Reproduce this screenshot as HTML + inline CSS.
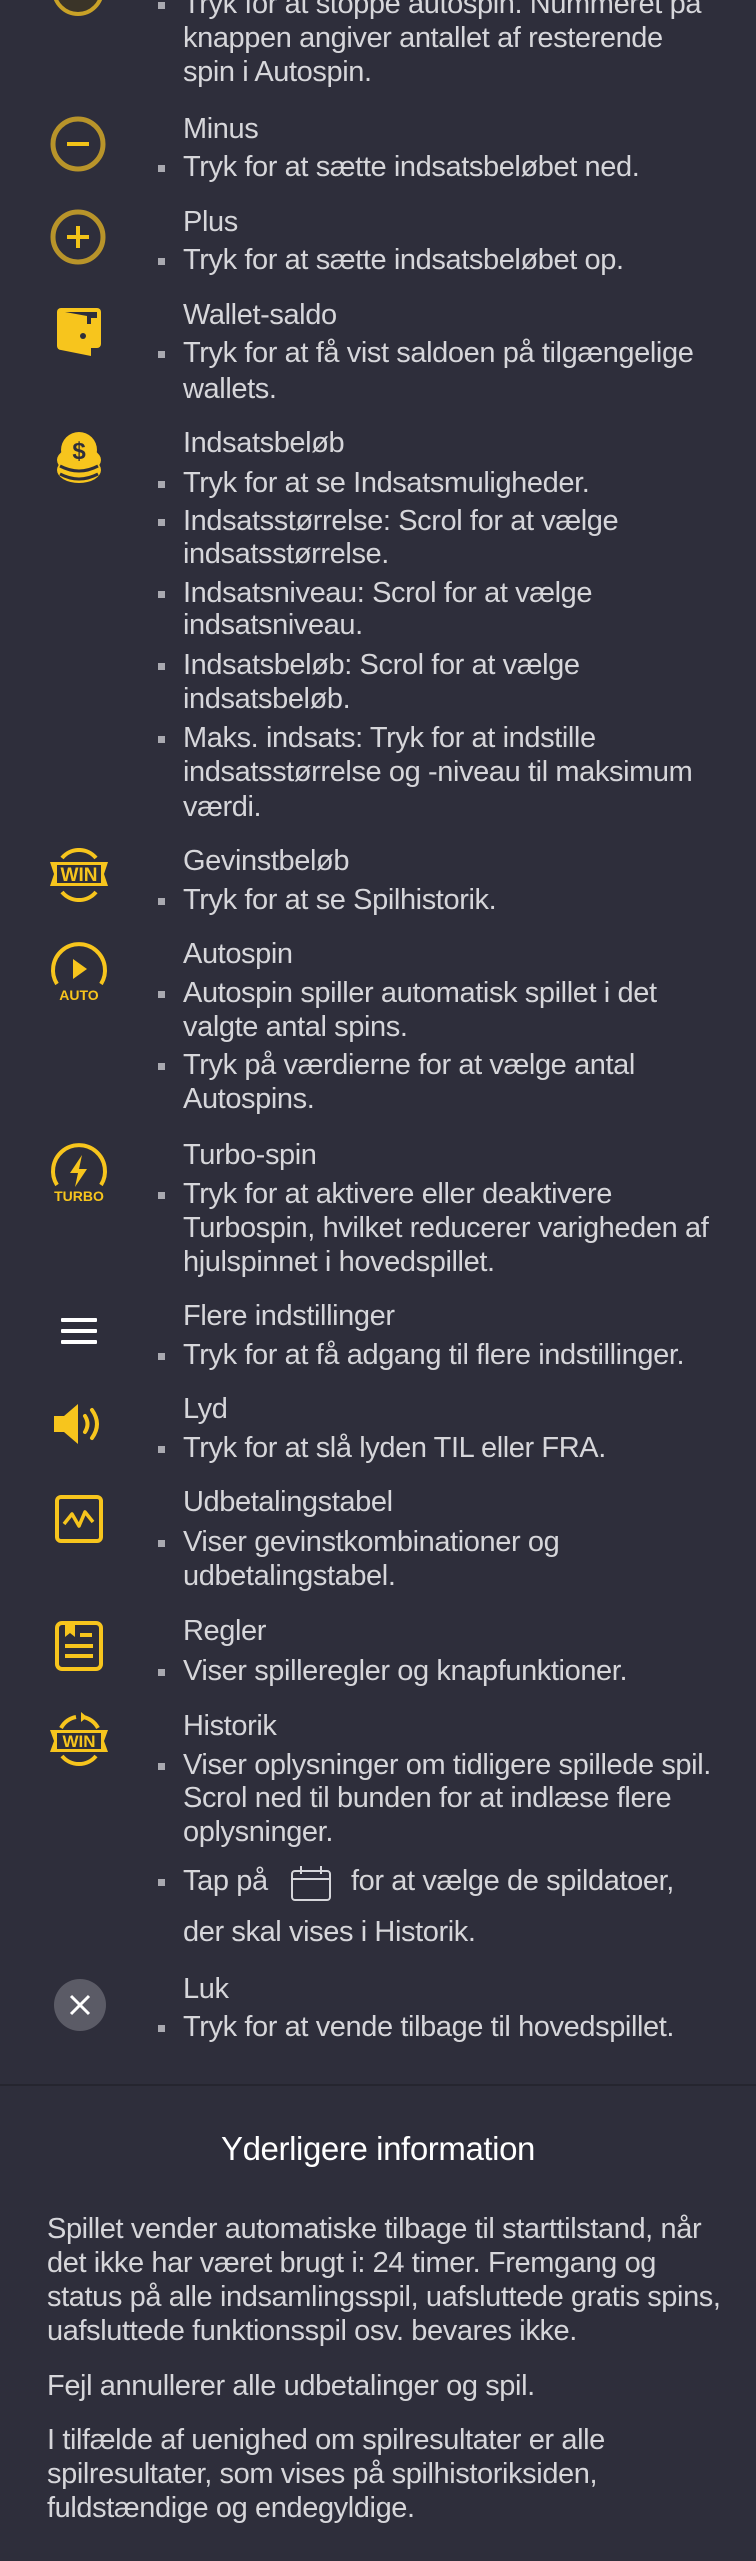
<!DOCTYPE html>
<html><head><meta charset="utf-8"><style>
*{margin:0;padding:0;box-sizing:border-box}
body{width:756px;height:2561px;background:#2e2e3b;position:relative;overflow:hidden;font-family:"Liberation Sans",sans-serif;color:#d6d6da}
.l{position:absolute;left:183px;height:34px;line-height:34px;font-size:29px;white-space:nowrap;letter-spacing:-0.4px}
.b::before{content:"";position:absolute;left:-25px;top:15px;width:7px;height:7px;background:#a9a9b0}
.p{position:absolute;left:47px;height:34px;line-height:34px;font-size:29px;white-space:nowrap;letter-spacing:-0.4px}
svg{position:absolute}
.sep{position:absolute;left:0;top:2084px;width:756px;height:2px;background:#25252f}
h2{position:absolute;top:2129px;left:0;width:756px;text-align:center;font-size:33px;font-weight:normal;color:#fff;line-height:40px;letter-spacing:-0.4px}
</style></head><body>

<svg style="left:50px;top:-24px" width="56" height="40" viewBox="0 0 56 40"><circle cx="28" cy="14" r="24" fill="#3a3428" stroke="#c9a227" stroke-width="4"/><rect x="14" y="10" width="28" height="6" fill="#d8a91e"/></svg>
<div class="l b" style="top:-13px">Tryk for at stoppe autospin. Nummeret på</div>
<div class="l" style="top:21px">knappen angiver antallet af resterende</div>
<div class="l" style="top:55px">spin i Autospin.</div>

<svg style="left:50px;top:116px" width="56" height="56"><circle cx="28" cy="28" r="25" fill="none" stroke="#b8942a" stroke-width="5"/><rect x="17" y="26" width="22" height="4" fill="#f2c318"/></svg>
<div class="l" style="top:112px">Minus</div>
<div class="l b" style="top:150px">Tryk for at sætte indsatsbeløbet ned.</div>

<svg style="left:50px;top:209px" width="56" height="56"><circle cx="28" cy="28" r="25" fill="none" stroke="#b8942a" stroke-width="5"/><rect x="17" y="26" width="22" height="4" fill="#f2c318"/><rect x="26" y="17" width="4" height="22" fill="#f2c318"/></svg>
<div class="l" style="top:205px">Plus</div>
<div class="l b" style="top:243px">Tryk for at sætte indsatsbeløbet op.</div>

<svg style="left:55px;top:306px" width="50" height="52" viewBox="0 0 50 52"><rect x="2" y="2" width="44" height="40" rx="4" fill="#f7c51d"/><path d="M2 10l34 4v36L6 44a4 4 0 0 1-4-4z" fill="#f7c51d"/><path d="M10 6h32v6h-6v6h-4v-8z" fill="#2e2e3b"/><circle cx="28" cy="30" r="3" fill="#2e2e3b"/></svg>
<div class="l" style="top:298px">Wallet-saldo</div>
<div class="l b" style="top:336px">Tryk for at få vist saldoen på tilgængelige</div>
<div class="l" style="top:372px">wallets.</div>

<svg style="left:56px;top:432px" width="46" height="52" viewBox="0 0 46 52"><ellipse cx="23" cy="38" rx="22" ry="13" fill="#f7c51d"/><ellipse cx="23" cy="28" rx="22" ry="13" fill="#f7c51d"/><path d="M4 34q19 10 38 0M4 42q19 10 38 0" stroke="#2e2e3b" stroke-width="3" fill="none"/><circle cx="23" cy="18" r="18" fill="#f7c51d"/><text x="23" y="27" text-anchor="middle" font-family="Liberation Sans" font-weight="bold" font-size="24" fill="#2e2e3b">$</text></svg>
<div class="l" style="top:426px">Indsatsbeløb</div>
<div class="l b" style="top:466px">Tryk for at se Indsatsmuligheder.</div>
<div class="l b" style="top:504px">Indsatsstørrelse: Scrol for at vælge</div>
<div class="l" style="top:537px">indsatsstørrelse.</div>
<div class="l b" style="top:576px">Indsatsniveau: Scrol for at vælge</div>
<div class="l" style="top:608px">indsatsniveau.</div>
<div class="l b" style="top:648px">Indsatsbeløb: Scrol for at vælge</div>
<div class="l" style="top:682px">indsatsbeløb.</div>
<div class="l b" style="top:721px">Maks. indsats: Tryk for at indstille</div>
<div class="l" style="top:755px">indsatsstørrelse og -niveau til maksimum</div>
<div class="l" style="top:790px">værdi.</div>

<svg style="left:48px;top:848px" width="62" height="54" viewBox="0 0 62 54"><path d="M14 10a22 22 0 0 1 34 0M14 44a22 22 0 0 0 34 0" stroke="#f7c51d" stroke-width="4" fill="none"/><path d="M2 14h58l-4 12 4 12H2l4-12z" fill="#f7c51d"/><rect x="9" y="17" width="44" height="18" fill="#2e2e3b"/><text x="31" y="33" text-anchor="middle" font-family="Liberation Sans" font-weight="bold" font-size="19" fill="#f7c51d">WIN</text></svg>
<div class="l" style="top:844px">Gevinstbeløb</div>
<div class="l b" style="top:883px">Tryk for at se Spilhistorik.</div>

<svg style="left:48px;top:940px" width="62" height="64" viewBox="0 0 62 64"><path d="M9 44A26 26 0 1 1 53 44" stroke="#f7c51d" stroke-width="4" fill="none"/><path d="M25 19l14 10-14 10z" fill="#f7c51d"/><text x="31" y="60" text-anchor="middle" font-family="Liberation Sans" font-weight="bold" font-size="14" fill="#f7c51d">AUTO</text></svg>
<div class="l" style="top:937px">Autospin</div>
<div class="l b" style="top:976px">Autospin spiller automatisk spillet i det</div>
<div class="l" style="top:1010px">valgte antal spins.</div>
<div class="l b" style="top:1048px">Tryk på værdierne for at vælge antal</div>
<div class="l" style="top:1082px">Autospins.</div>

<svg style="left:48px;top:1141px" width="62" height="64" viewBox="0 0 62 64"><path d="M9 44A26 26 0 1 1 53 44" stroke="#f7c51d" stroke-width="4" fill="none"/><path d="M34 14l-12 18h8l-3 14 12-18h-8z" fill="#f7c51d"/><text x="31" y="60" text-anchor="middle" font-family="Liberation Sans" font-weight="bold" font-size="14" fill="#f7c51d">TURBO</text></svg>
<div class="l" style="top:1138px">Turbo-spin</div>
<div class="l b" style="top:1177px">Tryk for at aktivere eller deaktivere</div>
<div class="l" style="top:1211px">Turbospin, hvilket reducerer varigheden af</div>
<div class="l" style="top:1245px">hjulspinnet i hovedspillet.</div>

<svg style="left:61px;top:1316px" width="36" height="30"><rect y="2" width="36" height="4" rx="1" fill="#fff"/><rect y="13" width="36" height="4" rx="1" fill="#fff"/><rect y="24" width="36" height="4" rx="1" fill="#fff"/></svg>
<div class="l" style="top:1299px">Flere indstillinger</div>
<div class="l b" style="top:1338px">Tryk for at få adgang til flere indstillinger.</div>

<svg style="left:52px;top:1400px" width="56" height="48" viewBox="0 0 56 48"><path d="M2 16h10l14-12v40L12 32H2z" fill="#f7c51d"/><path d="M33 16q5 8 0 16M40 10q10 14 0 28" stroke="#f7c51d" stroke-width="4" fill="none" stroke-linecap="round"/></svg>
<div class="l" style="top:1392px">Lyd</div>
<div class="l b" style="top:1431px">Tryk for at slå lyden TIL eller FRA.</div>

<svg style="left:54px;top:1494px" width="50" height="50"><rect x="3" y="3" width="44" height="44" rx="4" fill="none" stroke="#f7c51d" stroke-width="4"/><path d="M10 30l8-10 7 12 6-14 8 10" stroke="#f7c51d" stroke-width="3.5" fill="none" stroke-linejoin="round"/></svg>
<div class="l" style="top:1485px">Udbetalingstabel</div>
<div class="l b" style="top:1525px">Viser gevinstkombinationer og</div>
<div class="l" style="top:1559px">udbetalingstabel.</div>

<svg style="left:54px;top:1619px" width="50" height="54"><rect x="3" y="4" width="44" height="46" rx="5" fill="none" stroke="#f7c51d" stroke-width="4"/><path d="M11 2h10v16l-5-4-5 4z" fill="#f7c51d"/><rect x="26" y="14" width="12" height="4" fill="#f7c51d"/><rect x="11" y="25" width="28" height="4" fill="#f7c51d"/><rect x="11" y="35" width="28" height="4" fill="#f7c51d"/></svg>
<div class="l" style="top:1614px">Regler</div>
<div class="l b" style="top:1654px">Viser spilleregler og knapfunktioner.</div>

<svg style="left:48px;top:1712px" width="62" height="56" viewBox="0 0 62 56"><path d="M13 16a22 22 0 0 1 15-11M35 5a22 22 0 0 1 15 11M14 44a22 22 0 0 0 34 0" stroke="#f7c51d" stroke-width="4" fill="none"/><path d="M33 0l6 5-6 5z" fill="#f7c51d"/><path d="M2 18h58l-4 11 4 11H2l4-11z" fill="#f7c51d"/><rect x="9" y="21" width="44" height="16" fill="#2e2e3b"/><text x="31" y="35" text-anchor="middle" font-family="Liberation Sans" font-weight="bold" font-size="17" fill="#f7c51d">WIN</text></svg>
<div class="l" style="top:1709px">Historik</div>
<div class="l b" style="top:1748px">Viser oplysninger om tidligere spillede spil.</div>
<div class="l" style="top:1781px">Scrol ned til bunden for at indlæse flere</div>
<div class="l" style="top:1815px">oplysninger.</div>
<div class="l b" style="top:1864px">Tap på</div>
<svg style="left:290px;top:1866px" width="42" height="36"><rect x="2" y="5" width="38" height="29" rx="3" fill="none" stroke="#d6d6da" stroke-width="2"/><line x1="2" y1="13" x2="40" y2="13" stroke="#d6d6da" stroke-width="2"/><line x1="11" y1="0" x2="11" y2="8" stroke="#d6d6da" stroke-width="2"/><line x1="31" y1="0" x2="31" y2="8" stroke="#d6d6da" stroke-width="2"/></svg>
<div class="l" style="top:1864px;left:351px">for at vælge de spildatoer,</div>
<div class="l" style="top:1915px">der skal vises i Historik.</div>

<svg style="left:53px;top:1978px" width="54" height="54"><circle cx="27" cy="27" r="26" fill="#5b5b66"/><path d="M18 18l18 18M36 18L18 36" stroke="#fff" stroke-width="3"/></svg>
<div class="l" style="top:1972px">Luk</div>
<div class="l b" style="top:2010px">Tryk for at vende tilbage til hovedspillet.</div>

<div class="sep"></div>
<h2>Yderligere information</h2>
<div class="p" style="top:2212px">Spillet vender automatiske tilbage til starttilstand, når</div>
<div class="p" style="top:2246px">det ikke har været brugt i: 24 timer. Fremgang og</div>
<div class="p" style="top:2280px">status på alle indsamlingsspil, uafsluttede gratis spins,</div>
<div class="p" style="top:2314px">uafsluttede funktionsspil osv. bevares ikke.</div>
<div class="p" style="top:2369px">Fejl annullerer alle udbetalinger og spil.</div>
<div class="p" style="top:2423px">I tilfælde af uenighed om spilresultater er alle</div>
<div class="p" style="top:2457px">spilresultater, som vises på spilhistoriksiden,</div>
<div class="p" style="top:2491px">fuldstændige og endegyldige.</div>
</body></html>
